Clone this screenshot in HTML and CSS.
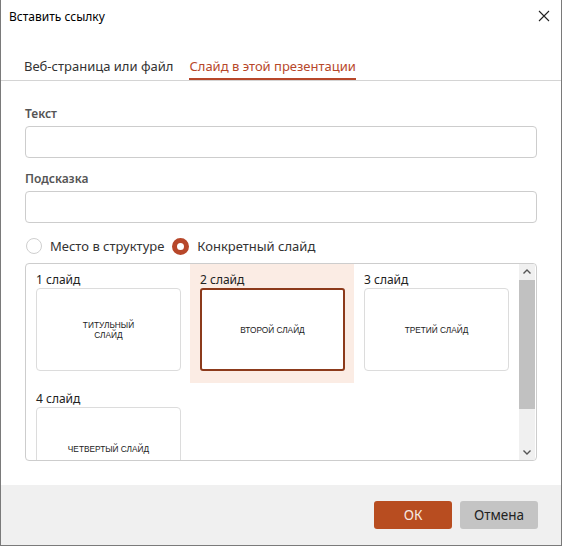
FILE: index.html
```html
<!DOCTYPE html>
<html lang="ru">
<head>
  <meta charset="UTF-8" />
  <meta name="viewport" content="width=device-width, initial-scale=1" />
  <title>Вставить ссылку</title>
  <link rel="stylesheet" href="styles.css">
</head>
<body>

  <div class="dialog">
    <!-- Заголовок окна -->
    <div class="titlebar">
      <span class="title">Вставить ссылку</span>
      <button class="close" aria-label="Закрыть">
        <svg width="12" height="12" viewBox="0 0 12 12">
          <path d="M1 1 L11 11 M11 1 L1 11" stroke="#222" stroke-width="1.1" fill="none" />
        </svg>
      </button>
    </div>

    <!-- Вкладки -->
    <div class="tabs">
      <span class="tab">Веб-страница или файл</span>
      <span class="tab active">Слайд в этой презентации</span>
    </div>

    <div class="content">
      <label class="field-label" for="text">Текст</label>
      <input class="field" type="text" id="text">

      <label class="field-label" for="tooltip">Подсказка</label>
      <input class="field" type="text" id="tooltip">

      <div class="radios">
        <span class="radio"><span class="dot"></span>Место в структуре</span>
        <span class="radio checked"><span class="dot"></span>Конкретный слайд</span>
      </div>

      <!-- Список слайдов -->
      <div class="slides">
        <div class="slides-grid">
          <div class="slide">
            <div class="slide-name">1 слайд</div>
            <div class="thumb">ТИТУЛЬНЫЙ<br>СЛАЙД</div>
          </div>
          <div class="slide selected">
            <div class="slide-name">2 слайд</div>
            <div class="thumb">ВТОРОЙ СЛАЙД</div>
          </div>
          <div class="slide">
            <div class="slide-name">3 слайд</div>
            <div class="thumb">ТРЕТИЙ СЛАЙД</div>
          </div>
          <div class="slide">
            <div class="slide-name">4 слайд</div>
            <div class="thumb">ЧЕТВЕРТЫЙ СЛАЙД</div>
          </div>
        </div>
        <div class="scrollbar">
          <svg class="arrow" width="16" height="16" viewBox="0 0 16 16">
            <path d="M4.5 9.5 L8 6 L11.5 9.5" stroke="#555" stroke-width="1.4" fill="none" />
          </svg>
          <div class="scroll-thumb"></div>
          <div class="scroll-rest"></div>
          <svg class="arrow" width="16" height="16" viewBox="0 0 16 16">
            <path d="M4.5 6.5 L8 10 L11.5 6.5" stroke="#555" stroke-width="1.4" fill="none" />
          </svg>
        </div>
      </div>
    </div>

    <div class="footer">
      <button class="btn primary">ОК</button>
      <button class="btn">Отмена</button>
    </div>
  </div>

</body>
</html>
```

FILE: styles.css
```css
* {
  box-sizing: border-box;
}

body {
  margin: 0;
  background-color: #ffffff;
  color: #222;
  font-family: 'Noto Sans', 'Open Sans', sans-serif;
}

.dialog {
  width: 562px;
  height: 546px;
  display: flex;
  flex-direction: column;
  border: 1px solid #7a7a7a;
  border-top: none;
  background-color: #ffffff;
}

.titlebar {
  height: 32px;
  display: flex;
  align-items: center;
  justify-content: space-between;
  padding-left: 8px;
}

.title {
  font-size: 12px;
  color: #000;
}

.close {
  width: 34px;
  height: 32px;
  border: none;
  background: none;
  display: flex;
  align-items: center;
  justify-content: center;
  padding: 0;
}

.tabs {
  display: flex;
  gap: 16px;
  padding: 24px 0 0 23px;
  border-bottom: 1px solid #d4d4d4;
}

.tab {
  font-size: 13px;
  line-height: 20px;
  padding-bottom: 2px;
  border-bottom: 2px solid transparent;
  color: #333;
}

.tab.active {
  color: #b7472a;
  border-bottom-color: #b7472a;
}

.content {
  padding: 25px 24px 0 24px;
  display: flex;
  flex-direction: column;
}

.field-label {
  font-size: 12px;
  line-height: 16px;
  font-weight: 600;
  color: #555;
}

.field {
  height: 32px;
  margin: 4px 0 13px;
  border: 1px solid #cdcdcd;
  border-radius: 4px;
  font: inherit;
}

.radios {
  display: flex;
  align-items: center;
  gap: 8px;
  height: 20px;
  margin-bottom: 7px;
}

.radio {
  display: flex;
  align-items: center;
  gap: 8px;
  font-size: 13px;
  color: #333;
}

.dot {
  width: 16px;
  height: 16px;
  border-radius: 50%;
  border: 1px solid #cfcfcf;
  margin-left: 1px;
}

.radio.checked .dot {
  width: 17px;
  height: 17px;
  border: 5px solid #b7472a;
  margin-left: 0;
}

.slides {
  height: 198px;
  display: flex;
  border: 1px solid #cdcdcd;
  border-radius: 4px;
  overflow: hidden;
}

.slides-grid {
  flex: 1;
  display: grid;
  grid-template-columns: repeat(3, 164px);
  align-content: start;
  overflow: hidden;
}

.slide {
  padding: 8px 9px 12px 10px;
}

.slide.selected {
  background-color: #fbece4;
}

.slide-name {
  font-size: 12px;
  line-height: 16px;
  color: #222;
}

.thumb {
  width: 145px;
  height: 83px;
  display: flex;
  align-items: center;
  justify-content: center;
  text-align: center;
  border: 1px solid #dcdcdc;
  border-radius: 4px;
  background-color: #fff;
  font-family: 'Liberation Sans', Arial, sans-serif;
  font-size: 8.3px;
  line-height: 10px;
  color: #222;
}

.slide.selected .thumb {
  border: 2px solid #8c3a1b;
  border-radius: 3px;
}

.scrollbar {
  width: 16px;
  margin-right: 1px;
  display: flex;
  flex-direction: column;
  background-color: #f0f0f0;
}

.arrow {
  display: block;
  height: 16px;
  flex: none;
}

.scroll-thumb {
  height: 129px;
  background-color: #c1c1c1;
}

.scroll-rest {
  flex: 1;
}

.footer {
  margin-top: auto;
  height: 60px;
  background-color: #f0f0f0;
  display: flex;
  justify-content: flex-end;
  gap: 8px;
  padding: 16px 23px 0 0;
}

.btn {
  width: 78px;
  height: 28px;
  border: none;
  border-radius: 3px;
  background-color: #c4c4c4;
  color: #222;
  font-family: inherit;
  font-size: 13.5px;
  cursor: pointer;
}

.btn.primary {
  background-color: #b84d20;
  color: #f7e9e2;
}
```
